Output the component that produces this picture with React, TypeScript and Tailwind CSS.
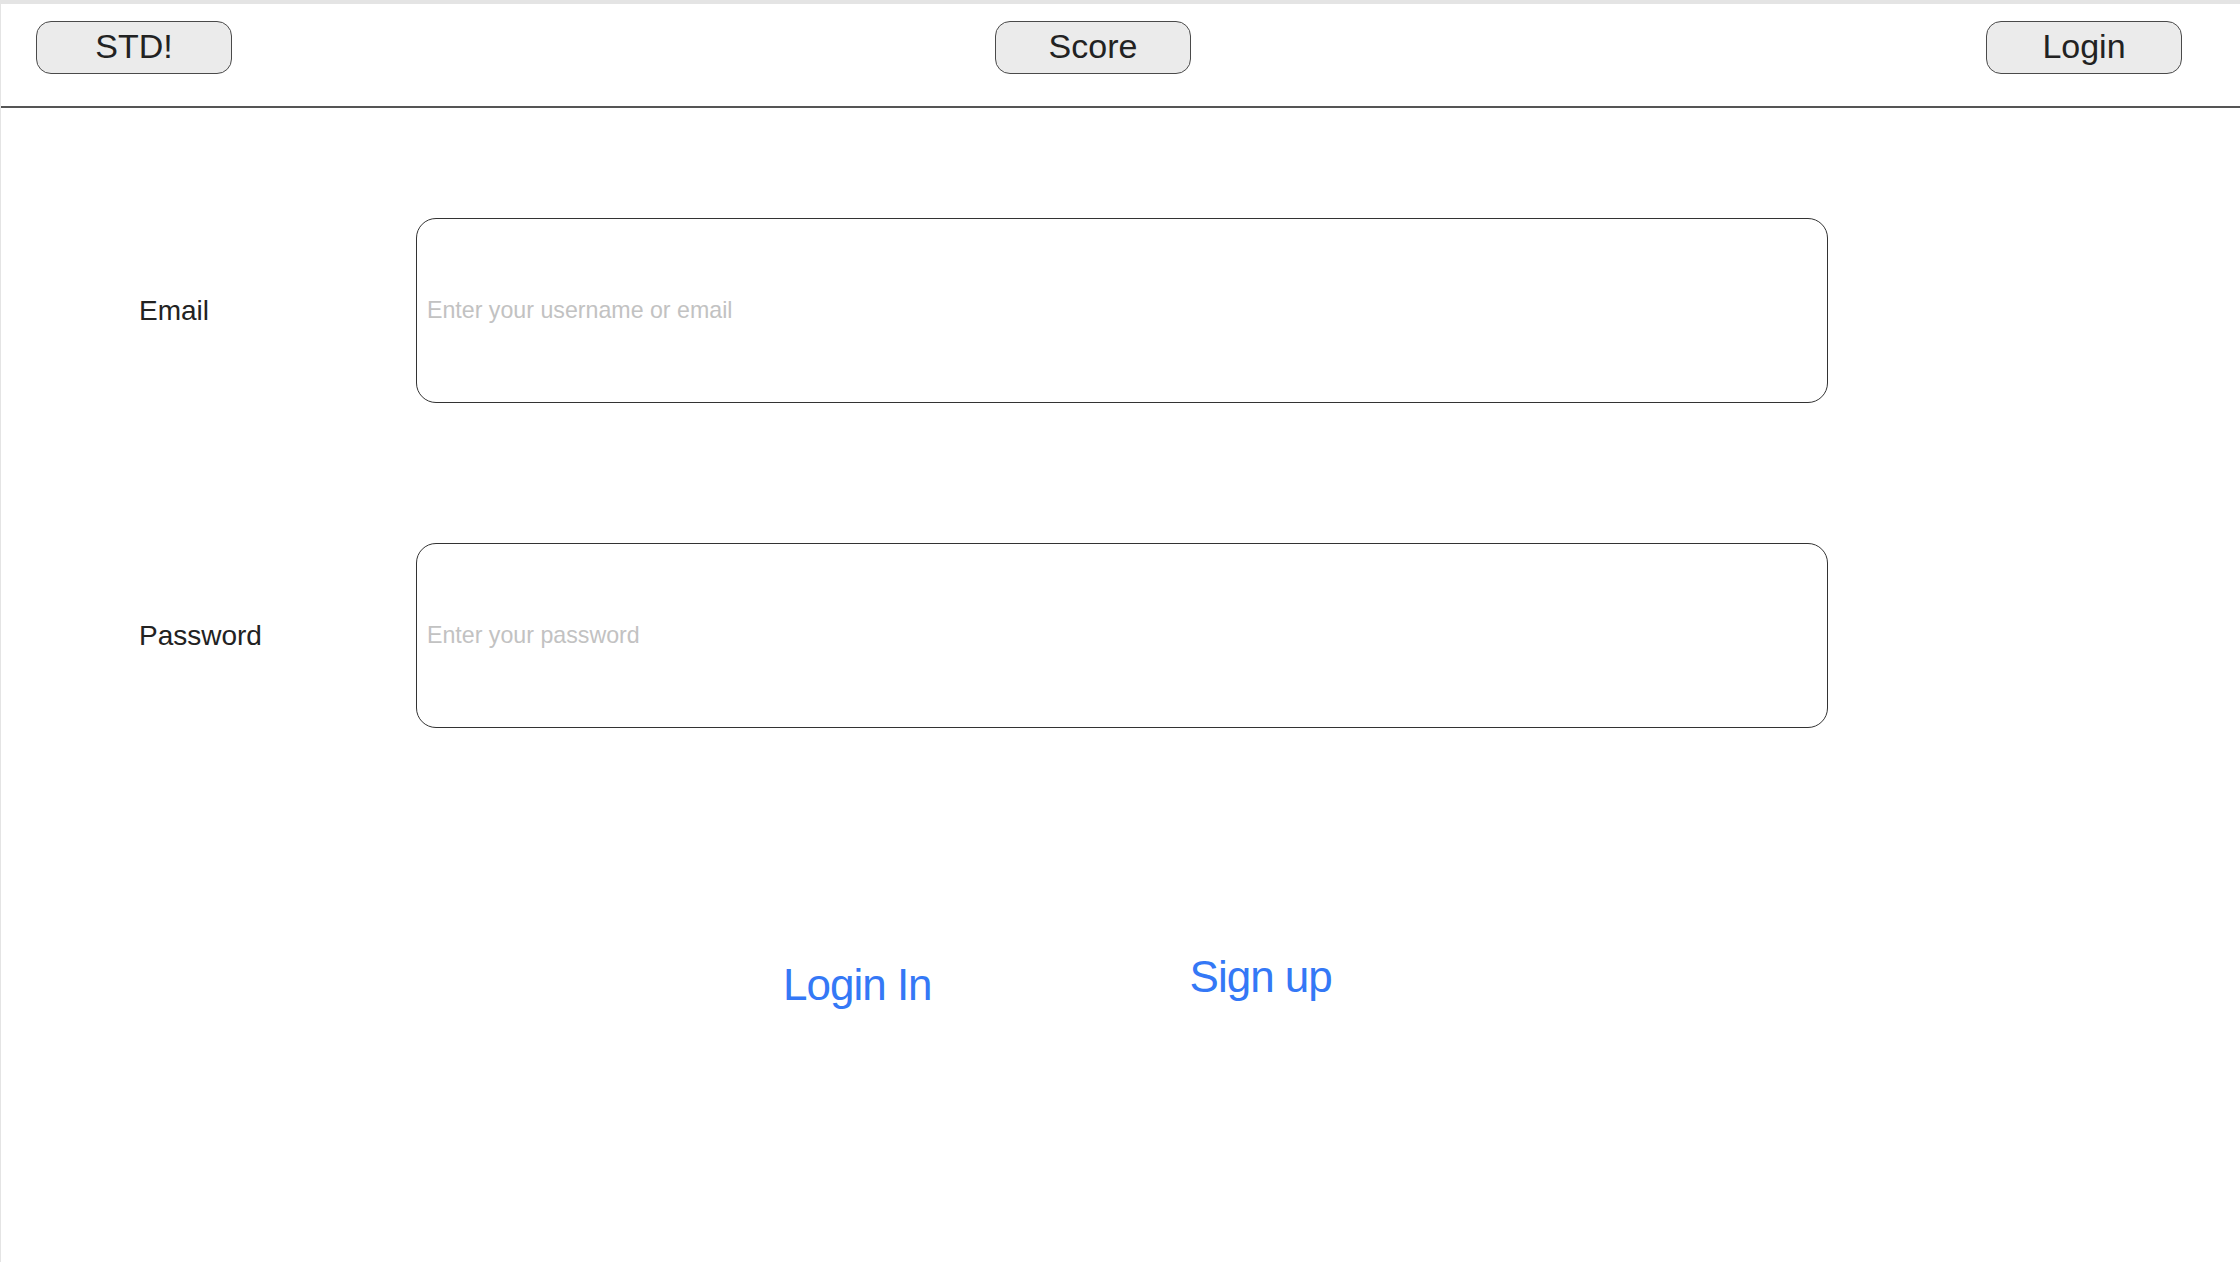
import React from "react";

const navBtn =
  "h-[53px] w-[196px] rounded-[15px] border border-[#4a4a4a] bg-[#ebebeb] pb-[3px] text-[34px] text-[#222] flex items-center justify-center";

const Field = ({ label, placeholder, type }: { label: string; placeholder: string; type: string }) => (
  <div className="flex items-center pl-[138px]">
    <label className="w-[277px] text-[28px] text-[#222]">{label}</label>
    <input
      type={type}
      placeholder={placeholder}
      className="h-[185px] w-[1412px] rounded-[20px] border border-[#333] bg-white px-[10px] text-[23.2px] text-[#222] outline-none placeholder:text-[#c2c2c2]"
    />
  </div>
);

export default function App() {
  return (
    <div
      className="min-h-[1262px] w-full border-t-4 border-l border-[#e4e4e4] bg-white"
      style={{ fontFamily: '"Liberation Sans", Arial, sans-serif' }}
    >
      <header className="flex h-[104px] items-start border-b-2 border-[#555] pt-[17px]">
        <button className={navBtn + " ml-[35px]"}>STD!</button>
        <button className={navBtn + " ml-[763px]"}>Score</button>
        <button className={navBtn + " ml-[795px]"}>Login</button>
      </header>

      <main className="pt-[110px]">
        <div className="flex flex-col gap-[140px]">
          <Field label="Email" placeholder="Enter your username or email" type="text" />
          <Field label="Password" placeholder="Enter your password" type="password" />
        </div>

        <div className="mt-[216px] flex items-start">
          <a href="#" className="ml-[782px] mt-[8px] text-[44px] tracking-[-1px] text-[#3478f6]">
            Login In
          </a>
          <a href="#" className="ml-[258px] text-[44px] tracking-[-1px] text-[#3478f6]">
            Sign up
          </a>
        </div>
      </main>
    </div>
  );
}
